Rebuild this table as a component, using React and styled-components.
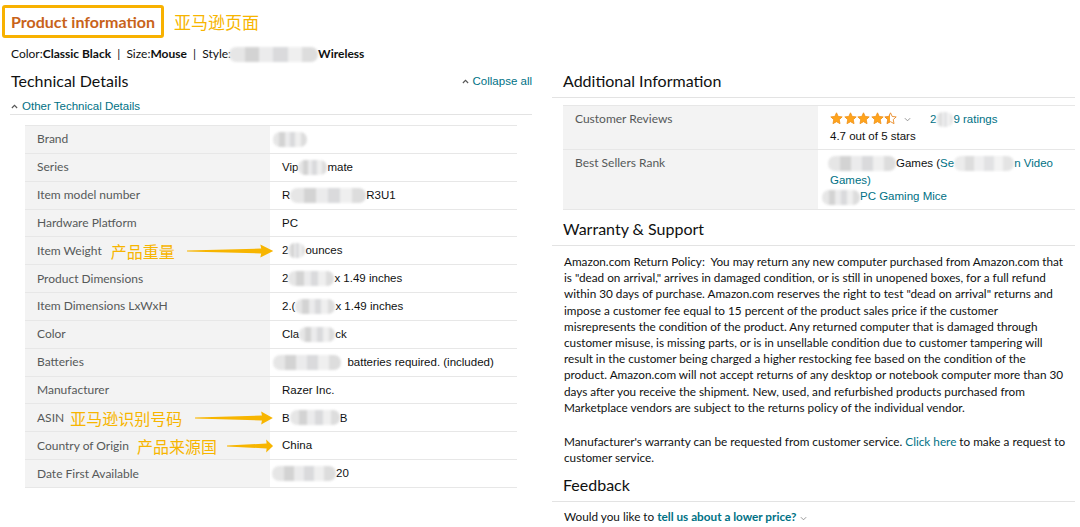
import React from 'react'
import styled, { createGlobalStyle } from 'styled-components'

const GlobalStyle = createGlobalStyle`
  body {
    margin: 0;
    background: #fff;
    font-family: Lato, "Noto Sans", sans-serif;
    color: #0f1111;
  }
`

const Page = styled.div`
  width: 1080px;
  height: 527px;
  box-sizing: border-box;
  padding: 5px 5px 0 10px;
  overflow: hidden;
`

const TitleRow = styled.div`
  display: flex;
  align-items: center;
  gap: 10px;
  margin-left: -8px;
`

const TitleBox = styled.div`
  height: 33px;
  box-sizing: border-box;
  border: 3px solid #f8b100;
  border-radius: 3px;
  padding: 0 6px;
  display: flex;
  align-items: center;
  font-size: 16px;
  font-weight: 700;
  color: #c8631a;
`

const Note = styled.span`
  font-family: "Noto Sans CJK SC", sans-serif;
  font-size: ${(p) => p.$size || 16}px;
  color: #f7b500;
  margin-left: ${(p) => p.$gap || 0}px;
  white-space: nowrap;
  line-height: 20px;
`

const VariantLine = styled.div`
  margin-top: 8px;
  font-size: 12px;
  line-height: 16px;
  padding-left: 1px;
  display: flex;
  align-items: center;
  white-space: pre;
  b {
    font-weight: 700;
  }
`

const Columns = styled.div`
  display: grid;
  grid-template-columns: 522px 523px;
  column-gap: 20px;
  margin-top: 8px;
`

const Column = styled.div`
  display: flex;
  flex-direction: column;
`

const HeaderRow = styled.div`
  display: flex;
  justify-content: space-between;
  align-items: center;
  padding-left: 1px;
  height: 22px;
`

const Heading = styled.h2`
  margin: ${(p) => p.$top || 0}px 0 0;
  font-size: 16px;
  font-weight: 400;
  line-height: 22px;
  color: #0f1111;
  padding: 0 0 ${(p) => (p.$rule ? 5 : 0)}px ${(p) => p.$indent || 0}px;
  border-bottom: ${(p) => (p.$rule ? '1px solid #e3e3e3' : 'none')};
`

const LinkText = styled.span`
  color: #007185;
  font-weight: ${(p) => (p.$bold ? 700 : 400)};
`

const Toggle = styled.span`
  display: inline-flex;
  align-items: center;
  gap: 4px;
  font-family: "Liberation Sans", Arial, sans-serif;
  font-size: 11.5px;
  line-height: 16px;
  color: #007185;
`

const SubHeader = styled.div`
  margin-top: 6px;
  height: 16px;
  display: flex;
  align-items: center;
  padding-left: 1px;
  border-bottom: 1px solid #e3e3e3;
`

const Table = styled.div`
  margin: ${(p) => p.$top || 0}px 0 0 ${(p) => p.$left || 0}px;
  width: ${(p) => p.$width}px;
  border-top: 1px solid #e7e7e7;
`

const Row = styled.div`
  display: grid;
  grid-template-columns: ${(p) => p.$label}px 1fr;
  height: ${(p) => p.$h}px;
  box-sizing: border-box;
  border-bottom: 1px solid #e7e7e7;
`

const Label = styled.div`
  background: #f3f3f3;
  padding: ${(p) => (p.$top ? '5px 12px 0' : '0 0 0 12px')};
  display: flex;
  align-items: ${(p) => (p.$top ? 'flex-start' : 'center')};
  font-size: 12px;
  color: #565959;
  white-space: nowrap;
  line-height: 16px;
  min-width: 0;
`

const Value = styled.div`
  padding: ${(p) => (p.$top ? '5px 12px 0' : '0 12px')};
  display: ${(p) => (p.$top ? 'block' : 'flex')};
  align-items: center;
  font-family: "Liberation Sans", Arial, sans-serif;
  font-size: 11.5px;
  line-height: 16.7px;
  color: #0f1111;
  white-space: ${(p) => (p.$top ? 'normal' : 'pre')};
`

const Blur = styled.span`
  display: inline-block;
  width: ${(p) => p.$w}px;
  height: 15px;
  margin-left: ${(p) => p.$shift || 0}px;
  vertical-align: middle;
  border-radius: 7px;
  background: linear-gradient(
    90deg,
    #e4e4e4 0 18%,
    #cfcfcf 18% 34%,
    #e9e9ea 34% 50%,
    #d6d7d9 50% 66%,
    #eeeeee 66% 82%,
    #dadada 82% 100%
  );
  filter: blur(0.8px);
  opacity: ${(p) => p.$o || 0.9};
`

const Arrow = styled.svg`
  flex: 1 1 0;
  width: 0;
  min-width: 0;
  height: 14px;
  margin: 0 -3px 0 ${(p) => p.$gap}px;
  overflow: visible;
`

const Stars = styled.span`
  display: inline-flex;
  align-items: center;
  gap: 0.5px;
  vertical-align: -2px;
`

const Chevron = styled.svg`
  width: 7px;
  height: 5px;
  margin: 0 ${(p) => p.$right || 0}px 0 ${(p) => p.$left || 0}px;
  vertical-align: middle;
`

const Paragraph = styled.p`
  margin: ${(p) => p.$top || 0}px 0 0;
  padding: 0 0 0 12px;
  font-size: 11.75px;
  line-height: 16.2px;
  color: #0f1111;
  white-space: pre;
`

const Line = styled.span`
  display: block;
`

const policyLines = [
  'Amazon.com Return Policy:  You may return any new computer purchased from Amazon.com that',
  'is "dead on arrival," arrives in damaged condition, or is still in unopened boxes, for a full refund',
  'within 30 days of purchase. Amazon.com reserves the right to test "dead on arrival" returns and',
  'impose a customer fee equal to 15 percent of the product sales price if the customer',
  'misrepresents the condition of the product. Any returned computer that is damaged through',
  'customer misuse, is missing parts, or is in unsellable condition due to customer tampering will',
  'result in the customer being charged a higher restocking fee based on the condition of the',
  'product. Amazon.com will not accept returns of any desktop or notebook computer more than 30',
  'days after you receive the shipment. New, used, and refurbished products purchased from',
  'Marketplace vendors are subject to the returns policy of the individual vendor.'
]

const techRows = [
  { label: 'Brand', value: <Blur $w={34} $shift={-9} /> },
  { label: 'Series', value: <>Vip<Blur $w={29} />mate</> },
  { label: 'Item model number', value: <>R<Blur $w={76} />R3U1</> },
  { label: 'Hardware Platform', value: 'PC' },
  {
    label: 'Item Weight',
    note: '产品重量',
    gap: 9,
    arrowGap: 12,
    value: <>2<Blur $w={17} />ounces</>
  },
  { label: 'Product Dimensions', value: <>2<Blur $w={46} />x 1.49 inches</> },
  { label: 'Item Dimensions LxWxH', value: <>2.(<Blur $w={40} />x 1.49 inches</> },
  { label: 'Color', value: <>Cla<Blur $w={36} />ck</> },
  { label: 'Batteries', value: <><Blur $w={68} $shift={-9} />  batteries required. (included)</> },
  { label: 'Manufacturer', value: 'Razer Inc.' },
  {
    label: 'ASIN',
    note: '亚马逊识别号码',
    gap: 6,
    arrowGap: 13,
    value: <>B<Blur $w={50} />B</>
  },
  {
    label: 'Country of Origin',
    note: '产品来源国',
    gap: 8,
    arrowGap: 10,
    value: 'China'
  },
  { label: 'Date First Available', value: <><Blur $w={64} $shift={-10} />20</> }
]

const Caret = () => (
  <Chevron viewBox="0 0 8 5">
    <path d="M1 4.2 L4 1.2 L7 4.2" fill="none" stroke="#555" strokeWidth="1.3" />
  </Chevron>
)

const DownCaret = ({ left, right }) => (
  <Chevron viewBox="0 0 8 5" $left={left} $right={right}>
    <path d="M1 1 L4 4 L7 1" fill="none" stroke="#888" strokeWidth="1" />
  </Chevron>
)

const NoteArrow = ({ gap }) => (
  <Arrow $gap={gap} viewBox="0 0 100 14" preserveAspectRatio="none">
    <polygon points="0,6.4 86,4.6 85,0.5 100,7 85,13.5 86,9.4 0,7.6" fill="#f7b500" />
  </Arrow>
)

const STAR = '12,1.5 15.1,8.2 22.5,9 17,14.1 18.5,21.5 12,17.8 5.5,21.5 7,14.1 1.5,9 8.9,8.2'

const Star = ({ half }) => (
  <svg width="13" height="13" viewBox="0 0 24 24">
    {half && (
      <defs>
        <linearGradient id="halfStar">
          <stop offset="50%" stopColor="#ffa41c" />
          <stop offset="50%" stopColor="#fff" />
        </linearGradient>
      </defs>
    )}
    <polygon
      points={STAR}
      fill={half ? 'url(#halfStar)' : '#ffa41c'}
      stroke={half ? '#e8851d' : '#f0931c'}
      strokeWidth="1.6"
      strokeLinejoin="round"
    />
  </svg>
)

const App = () => {
  return (
    <Page>
      <GlobalStyle />
      <TitleRow>
        <TitleBox>Product information</TitleBox>
        <Note $size={17}>亚马逊页面</Note>
      </TitleRow>
      <VariantLine>
        Color:<b>Classic Black</b>{'  |  '}Size:<b>Mouse</b>{'  |  '}Style:
        <Blur $w={89} $shift={-2} />
        <b>Wireless</b>
      </VariantLine>

      <Columns>
        <Column>
          <HeaderRow>
            <Heading>Technical Details</Heading>
            <Toggle>
              <Caret />
              Collapse all
            </Toggle>
          </HeaderRow>
          <SubHeader>
            <Toggle>
              <Caret />
              Other Technical Details
            </Toggle>
          </SubHeader>
          <Table $top={10} $left={15} $width={492}>
            {techRows.map((r) => (
              <Row key={r.label} $label={245} $h={27.85}>
                <Label>
                  {r.label}
                  {r.note && <Note $gap={r.gap}>{r.note}</Note>}
                  {r.note && <NoteArrow gap={r.arrowGap} />}
                </Label>
                <Value>{r.value}</Value>
              </Row>
            ))}
          </Table>
        </Column>

        <Column>
          <Heading $indent={11} $rule>
            Additional Information
          </Heading>
          <Table $top={7} $left={11} $width={512}>
            <Row $label={255} $h={44}>
              <Label $top>Customer Reviews</Label>
              <Value $top>
                <Stars>
                  <Star />
                  <Star />
                  <Star />
                  <Star />
                  <Star half />
                </Stars>
                <DownCaret left={7} right={19} />
                <LinkText>
                  2<Blur $w={17} $o={0.7} />9 ratings
                </LinkText>
                <br />
                4.7 out of 5 stars
              </Value>
            </Row>
            <Row $label={255} $h={60}>
              <Label $top>Best Sellers Rank</Label>
              <Value $top>
                <Blur $w={68} $shift={-2} />
                Games (<LinkText>Se<Blur $w={60} $o={0.7} />n Video Games)</LinkText>
                <br />
                <Blur $w={38} $shift={-8} />
                <LinkText>PC Gaming Mice</LinkText>
              </Value>
            </Row>
          </Table>

          <Heading $top={8} $indent={11} $rule>
            Warranty &amp; Support
          </Heading>
          <Paragraph $top={8}>
            {policyLines.map((l) => (
              <Line key={l}>{l}</Line>
            ))}
          </Paragraph>
          <Paragraph $top={18}>
            <Line>
              Manufacturer's warranty can be requested from customer service.{' '}
              <LinkText>Click here</LinkText> to make a request to
            </Line>
            <Line>customer service.</Line>
          </Paragraph>

          <Heading $top={8} $indent={11} $rule>
            Feedback
          </Heading>
          <Paragraph $top={7}>
            Would you like to <LinkText $bold>tell us about a lower price?</LinkText>
            <DownCaret left={4} />
          </Paragraph>
        </Column>
      </Columns>
    </Page>
  )
}

export default App
